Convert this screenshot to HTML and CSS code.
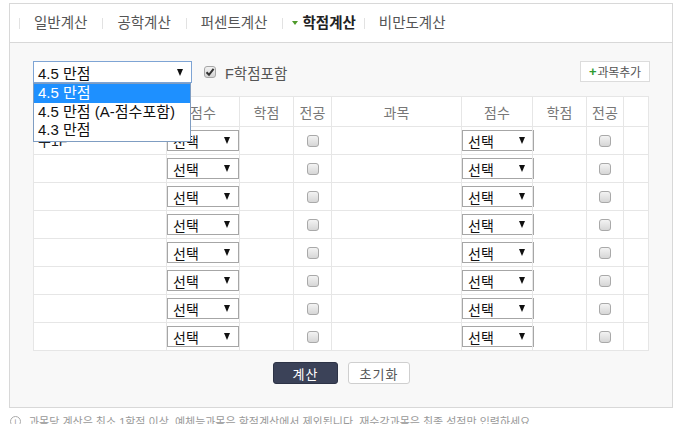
FILE: index.html
```html
<!DOCTYPE html>
<html lang="ko">
<head>
<meta charset="utf-8">
<title>학점계산</title>
<link rel="stylesheet" href="styles.css">
</head>
<body>
<div class="wrap">
  <div class="tabs">
    <span class="tab">일반계산</span>
    <span class="tab">공학계산</span>
    <span class="tab">퍼센트계산</span>
    <span class="tab active"><i class="tri"></i>학점계산</span>
    <span class="tab">비만도계산</span>
  </div>
  <div class="body">
    <div class="toolbar">
      <div class="main-select">
        <span>4.5 만점</span><i class="arrow"></i>
        <ul class="dropdown">
          <li class="on">4.5 만점</li>
          <li>4.5 만점 (A-점수포함)</li>
          <li>4.3 만점</li>
        </ul>
      </div>
      <span class="check checked"><svg width="10" height="10" viewBox="0 0 10 10"><path d="M1.5 5.2 L4 7.8 L8.6 1.8" fill="none" stroke="#333" stroke-width="2"/></svg></span>
      <span class="check-label">F학점포함</span>
      <button class="add-btn"><i class="plus">+</i>과목추가</button>
    </div>
    <table class="grid">
      <colgroup>
        <col style="width:133px"><col style="width:73px"><col style="width:54px"><col style="width:38px">
        <col style="width:130px"><col style="width:71px"><col style="width:54px"><col style="width:37px"><col style="width:25px">
      </colgroup>
      <thead>
        <tr><th>과목</th><th>점수</th><th>학점</th><th>전공</th><th>과목</th><th>점수</th><th>학점</th><th>전공</th><th></th></tr>
      </thead>
      <tbody>
        <tr><td class="subj">수1F</td><td class="sc"><div class="sel"><span>선택</span><i class="arrow"></i></div></td><td></td><td class="c"><span class="cb"></span></td><td></td><td class="sc"><div class="sel"><span>선택</span><i class="arrow"></i></div></td><td></td><td class="c"><span class="cb"></span></td><td></td></tr>
        <tr><td></td><td class="sc"><div class="sel"><span>선택</span><i class="arrow"></i></div></td><td></td><td class="c"><span class="cb"></span></td><td></td><td class="sc"><div class="sel"><span>선택</span><i class="arrow"></i></div></td><td></td><td class="c"><span class="cb"></span></td><td></td></tr>
        <tr><td></td><td class="sc"><div class="sel"><span>선택</span><i class="arrow"></i></div></td><td></td><td class="c"><span class="cb"></span></td><td></td><td class="sc"><div class="sel"><span>선택</span><i class="arrow"></i></div></td><td></td><td class="c"><span class="cb"></span></td><td></td></tr>
        <tr><td></td><td class="sc"><div class="sel"><span>선택</span><i class="arrow"></i></div></td><td></td><td class="c"><span class="cb"></span></td><td></td><td class="sc"><div class="sel"><span>선택</span><i class="arrow"></i></div></td><td></td><td class="c"><span class="cb"></span></td><td></td></tr>
        <tr><td></td><td class="sc"><div class="sel"><span>선택</span><i class="arrow"></i></div></td><td></td><td class="c"><span class="cb"></span></td><td></td><td class="sc"><div class="sel"><span>선택</span><i class="arrow"></i></div></td><td></td><td class="c"><span class="cb"></span></td><td></td></tr>
        <tr><td></td><td class="sc"><div class="sel"><span>선택</span><i class="arrow"></i></div></td><td></td><td class="c"><span class="cb"></span></td><td></td><td class="sc"><div class="sel"><span>선택</span><i class="arrow"></i></div></td><td></td><td class="c"><span class="cb"></span></td><td></td></tr>
        <tr><td></td><td class="sc"><div class="sel"><span>선택</span><i class="arrow"></i></div></td><td></td><td class="c"><span class="cb"></span></td><td></td><td class="sc"><div class="sel"><span>선택</span><i class="arrow"></i></div></td><td></td><td class="c"><span class="cb"></span></td><td></td></tr>
        <tr><td></td><td class="sc"><div class="sel"><span>선택</span><i class="arrow"></i></div></td><td></td><td class="c"><span class="cb"></span></td><td></td><td class="sc"><div class="sel"><span>선택</span><i class="arrow"></i></div></td><td></td><td class="c"><span class="cb"></span></td><td></td></tr>
      </tbody>
    </table>
    <div class="actions">
      <button class="btn-calc">계산</button>
      <button class="btn-reset">초기화</button>
    </div>
  </div>
</div>
<p class="note"><span class="info">i</span>과목당 계산은 최소 1학점 이상, 예체능과목은 학점계산에서 제외됩니다. 재수강과목은 최종 성적만 입력하세요.</p>
</body>
</html>
```
FILE: styles.css
```css
* { box-sizing: border-box; }
html, body { margin: 0; padding: 0; background: #fff; }
body {
  font-family: "Liberation Sans", "Noto Sans CJK KR", sans-serif;
  color: #222;
  width: 684px;
  height: 424px;
  overflow: hidden;
}
.wrap {
  margin: 3px 0 0 9px;
  width: 664px;
  border: 1px solid #d8d8d8;
}
.tabs {
  height: 39px;
  display: flex;
  align-items: center;
  padding-left: 9px;
  border-bottom: 1px solid #d8d8d8;
  background: #fff;
}
.tab {
  display: flex;
  align-items: center;
  height: 11px;
  line-height: 11px;
  border-left: 1px solid #e2e2e2;
  padding: 0 15px 0 14px;
  font-size: 14.5px;
  color: #555;
  white-space: nowrap;
}
.tab.active {
  padding: 0 8px 0 9px;
  font-weight: bold;
  color: #222;
}
.tri {
  display: inline-block;
  width: 0; height: 0;
  border-left: 3px solid transparent;
  border-right: 3px solid transparent;
  border-top: 4px solid #4e9a2a;
  margin-right: 4px;
}
.body {
  background: #f8f8f8;
  padding: 18px 22px 23px 23px;
}
.toolbar {
  display: flex;
  align-items: center;
  height: 22px;
}
.main-select {
  position: relative;
  width: 159px;
  height: 22px;
  border: 1px solid #7ea4d4;
  background: #fff;
  display: flex;
  align-items: center;
  justify-content: space-between;
  padding: 0 8px 0 4px;
  font-size: 15px;
  color: #111;
}
.arrow {
  display: inline-block;
  width: 0; height: 0;
  border-left: 3.5px solid transparent;
  border-right: 3.5px solid transparent;
  border-top: 7px solid #111;
}
.dropdown {
  position: absolute;
  top: 21px;
  left: -1px;
  width: 158px;
  margin: 0;
  padding: 0 0 2px;
  list-style: none;
  background: #fff;
  border: 1px solid #7f9dc2;
  z-index: 5;
}
.dropdown li {
  height: 18px;
  line-height: 18px;
  padding-left: 4px;
  font-size: 15px;
  color: #111;
  white-space: nowrap;
}
.dropdown li.on {
  height: 19px;
  background: #1e90ff;
  color: #fff;
}
.check {
  width: 12px;
  height: 12px;
  margin-left: 12px;
  border: 1px solid #a6a6a6;
  border-radius: 3px;
  background: linear-gradient(#f2f2f2, #d4d4d4);
  display: flex;
  align-items: center;
  justify-content: center;
}
.check-label {
  margin-left: 9px;
  font-size: 14.5px;
  color: #555;
}
.add-btn {
  margin-left: auto;
  width: 70px;
  height: 21px;
  margin-top: -1px;
  border: 1px solid #dcdcdc;
  background: #fff;
  font-family: "Liberation Sans", "Noto Sans CJK KR", sans-serif;
  font-size: 12px;
  color: #555;
  padding: 0;
  display: flex;
  align-items: center;
  justify-content: center;
  letter-spacing: -0.2px;
}
.plus {
  font-style: normal;
  font-weight: bold;
  color: #2e9b2e;
  font-size: 13px;
  margin-right: 1px;
}
.grid {
  margin-top: 13px;
  width: 615px;
  border-collapse: collapse;
  table-layout: fixed;
  background: #fff;
}
.grid th, .grid td {
  border: 1px solid #e6e6e6;
  padding: 0;
}
.grid th {
  height: 30px;
  font-weight: normal;
  font-size: 14px;
  color: #777;
  text-align: center;
}
.grid td {
  height: 28px;
  vertical-align: middle;
}
.grid td.subj {
  padding: 0 0 2px 4px;
  font-size: 14px;
  color: #222;
}
.grid td.c { text-align: center; }
.sel {
  width: 72px;
  height: 21px;
  border: 1px solid #a6a6a6;
  background: #fff;
  display: flex;
  align-items: center;
  justify-content: space-between;
  padding: 0 8px 0 5px;
  font-size: 14px;
  color: #111;
}
.cb {
  display: inline-block;
  vertical-align: middle;
  width: 12px;
  height: 12px;
  border: 1px solid #a9a9a9;
  border-radius: 3px;
  background: linear-gradient(#f3f3f3, #d6d6d6);
}
.actions {
  display: flex;
  justify-content: center;
  gap: 10px;
  margin-top: 11px;
}
.actions button {
  height: 22px;
  padding: 0;
  font-family: "Liberation Sans", "Noto Sans CJK KR", sans-serif;
  font-size: 13px;
  border-radius: 3px;
  letter-spacing: 1px;
}
.btn-calc {
  width: 65px;
  background: #3b4258;
  border: 1px solid #2d3346;
  color: #fff;
}
.btn-reset {
  width: 62px;
  background: #fff;
  border: 1px solid #cfcfcf;
  color: #555;
}
.note {
  margin: 5px 0 0 10px;
  font-size: 11px;
  color: #999;
  white-space: nowrap;
  display: flex;
  align-items: center;
}
.info {
  display: inline-flex;
  align-items: center;
  justify-content: center;
  width: 11px;
  height: 11px;
  border: 1px solid #aaa;
  border-radius: 50%;
  font-size: 8px;
  color: #999;
  margin-right: 8px;
}
```
